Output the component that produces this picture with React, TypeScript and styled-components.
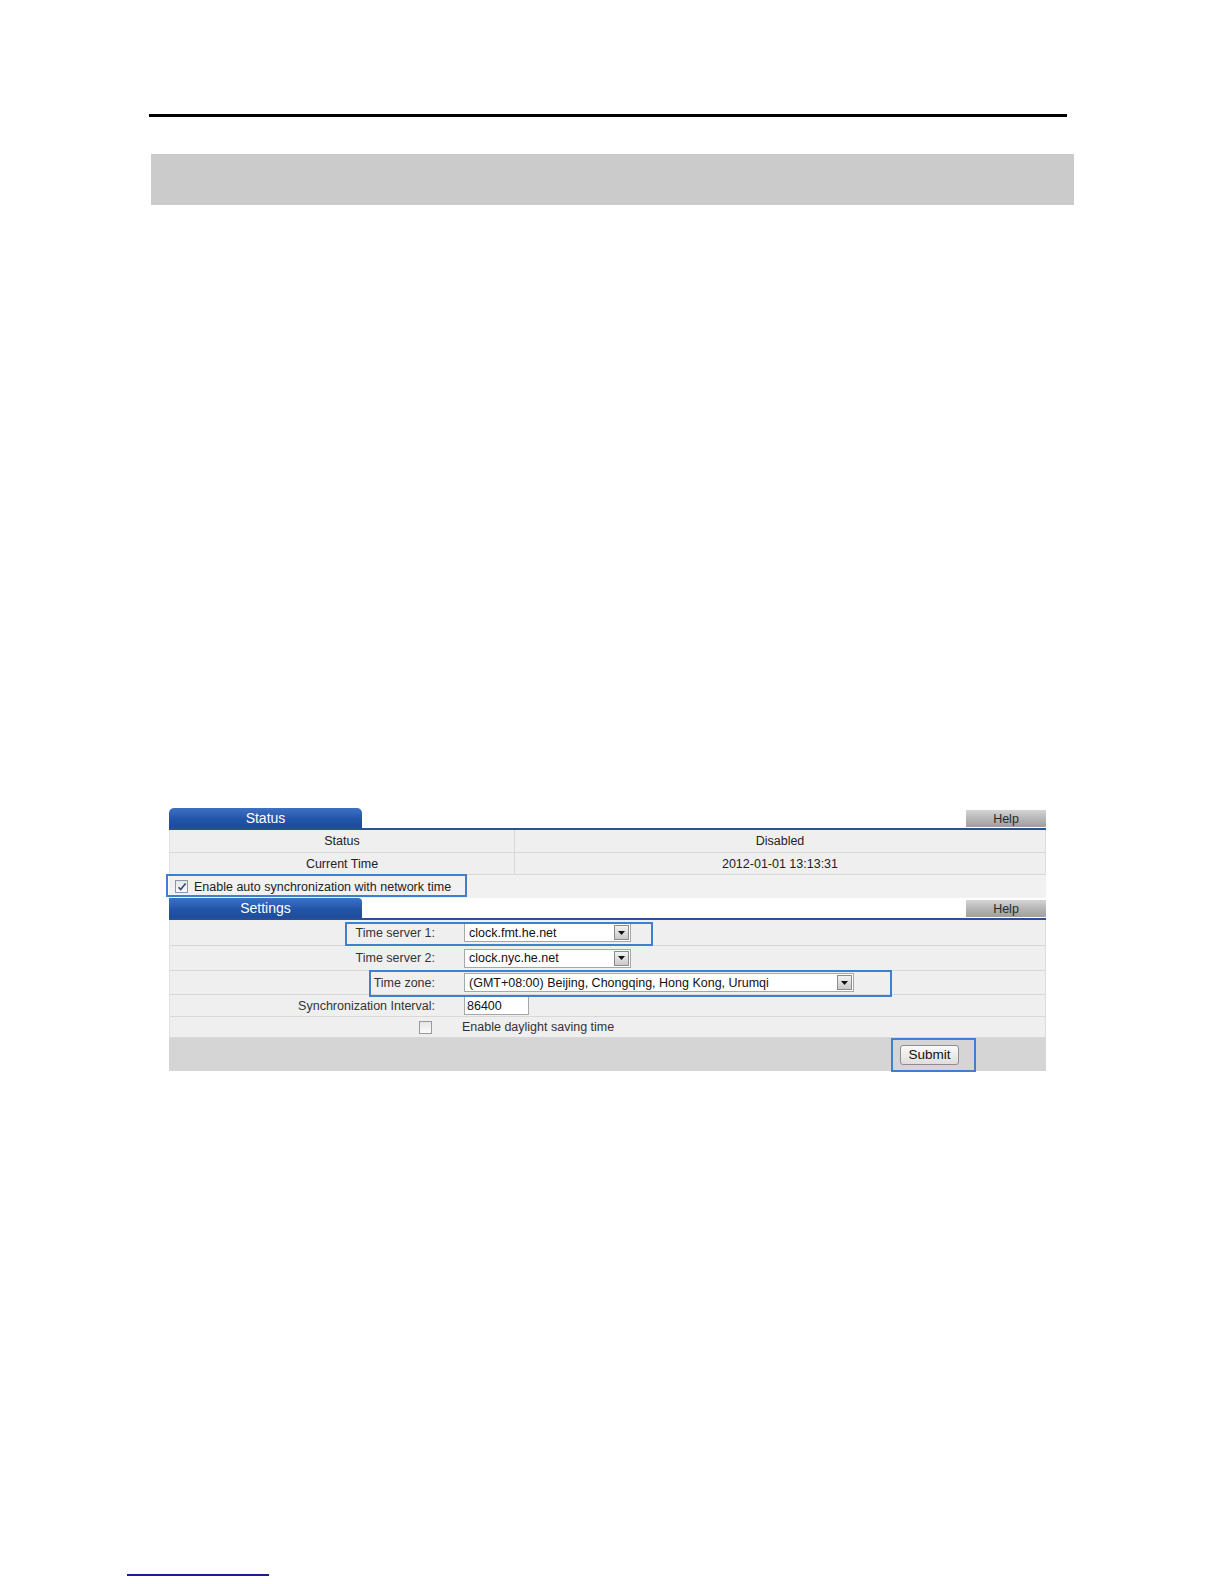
import React from 'react';
import styled, { createGlobalStyle } from 'styled-components';

const GlobalStyle = createGlobalStyle`
  html, body {
    margin: 0;
    padding: 0;
    background: #ffffff;
  }
  body {
    font-family: "Liberation Sans", Arial, sans-serif;
  }
`;

const Page = styled.div`
  width: 1224px;
  min-height: 1584px;
  display: flex;
  flex-direction: column;
  align-items: flex-start;
`;

const TopRule = styled.div`
  margin: 114px 0 0 149px;
  width: 918px;
  height: 3px;
  background: #000;
`;

const HeadingBand = styled.div`
  margin: 37px 0 0 151px;
  width: 923px;
  height: 51px;
  background: #cbcbcb;
`;

const FootRule = styled.div`
  margin: 503px 0 0 127px;
  width: 142px;
  height: 2px;
  background: #1c1c8c;
`;

const Panel = styled.div`
  position: relative;
  margin: 603px 0 0 169px;
  width: 877px;
  font-size: 12.5px;
  color: #222;
`;

const SectionHeader = styled.div`
  display: flex;
  justify-content: space-between;
  align-items: flex-end;
  height: 20px;
  border-bottom: 2px solid #2c5096;
`;

const Tab = styled.div<{ $square?: boolean }>`
  width: 193px;
  height: 20px;
  display: flex;
  align-items: center;
  justify-content: center;
  background: linear-gradient(#3e70c4, #2153a6 60%, #1f4c9a);
  border-radius: ${p => (p.$square ? '0 4px 0 0' : '5px 5px 0 0')};
  color: #fff;
  font-size: 14px;
`;

const HelpButton = styled.div`
  width: 80px;
  height: 17px;
  margin-bottom: 1px;
  display: flex;
  align-items: center;
  justify-content: center;
  background: linear-gradient(#d4d4d4, #b4b4b4 55%, #9f9f9f);
  color: #2a2a2a;
  font-size: 12.5px;
`;

const InfoRow = styled.div<{ $h: number }>`
  display: grid;
  grid-template-columns: 345px 1fr;
  height: ${p => p.$h}px;
  background: #efefef;
  border-bottom: 1px solid #d8d8d8;
  border-left: 1px solid #e2e2e2;
  border-right: 1px solid #dcdcdc;
  box-sizing: border-box;
`;

const InfoCell = styled.div<{ $divider?: boolean }>`
  display: flex;
  align-items: center;
  justify-content: center;
  border-right: ${p => (p.$divider ? '1px solid #d8d8d8' : 'none')};
`;

const CheckRow = styled.div`
  height: 23px;
  display: flex;
  align-items: center;
  gap: 6px;
  padding-left: 6px;
  background: #f1f1f1;
`;

const Box = styled.span<{ $checked?: boolean }>`
  width: 11px;
  height: 11px;
  display: inline-flex;
  align-items: center;
  justify-content: center;
  border: 1px solid ${p => (p.$checked ? '#8597b4' : '#9a9a9a')};
  background: linear-gradient(#e6e6e6, #fbfbfb);
  flex-shrink: 0;
`;

const SettingRow = styled.div<{ $h: number }>`
  display: grid;
  grid-template-columns: 265px 1fr;
  column-gap: 29px;
  align-items: center;
  height: ${p => p.$h}px;
  background: #efefef;
  border-bottom: 1px solid #d8d8d8;
  border-left: 1px solid #e2e2e2;
  border-right: 1px solid #dcdcdc;
  box-sizing: border-box;
`;

const Label = styled.div<{ $left?: boolean }>`
  text-align: ${p => (p.$left ? 'left' : 'right')};
  margin-left: ${p => (p.$left ? '-2px' : '0')};
  color: #333;
`;

const Field = styled.div`
  display: flex;
  align-items: center;
`;

const Select = styled.div<{ $w: number }>`
  width: ${p => p.$w}px;
  height: 19px;
  box-sizing: border-box;
  display: flex;
  align-items: center;
  justify-content: space-between;
  padding: 0 1px 0 4px;
  background: #fff;
  border: 1px solid #a7a7a7;
  color: #111;
`;

const Arrow = styled.span`
  width: 15px;
  height: 15px;
  box-sizing: border-box;
  display: inline-flex;
  align-items: center;
  justify-content: center;
  border: 1px solid #8c8c8c;
  background: linear-gradient(#f2f2f2, #c9c9c9);
`;

const TextInput = styled.div`
  width: 65px;
  height: 19px;
  box-sizing: border-box;
  display: flex;
  align-items: center;
  padding-left: 2px;
  background: #fff;
  border: 1px solid #a7a7a7;
  color: #111;
`;

const CheckCell = styled.div`
  display: flex;
  justify-content: flex-end;
  padding-right: 3px;
`;

const Footer = styled.div`
  height: 33px;
  display: flex;
  align-items: center;
  padding-left: 731px;
  background: #d5d5d5;
`;

const SubmitButton = styled.div`
  width: 59px;
  height: 20px;
  box-sizing: border-box;
  display: flex;
  align-items: center;
  justify-content: center;
  border: 1px solid #8e8e8e;
  border-radius: 3px;
  background: linear-gradient(#fafafa, #dedede);
  color: #111;
  font-size: 13.5px;
`;

const Highlight = styled.div<{ $x: number; $y: number; $w: number; $h: number }>`
  position: absolute;
  left: ${p => p.$x}px;
  top: ${p => p.$y}px;
  width: ${p => p.$w}px;
  height: ${p => p.$h}px;
  box-sizing: border-box;
  border: 2px solid #3f80cc;
  pointer-events: none;
`;

const DownArrow = () => (
  <svg width="7" height="4" viewBox="0 0 7 4">
    <path d="M0 0h7L3.5 4z" fill="#111" />
  </svg>
);

const Tick = () => (
  <svg width="10" height="10" viewBox="0 0 10 10">
    <path d="M1.5 5.2l2.2 2.4L8.6 1.6" fill="none" stroke="#2b4a86" strokeWidth="1.6" />
  </svg>
);

export default function App() {
  return (
    <Page>
      <GlobalStyle />
      <TopRule />
      <HeadingBand />

      <Panel>
        <SectionHeader>
          <Tab>Status</Tab>
          <HelpButton>Help</HelpButton>
        </SectionHeader>
        <InfoRow $h={23}>
          <InfoCell $divider>Status</InfoCell>
          <InfoCell>Disabled</InfoCell>
        </InfoRow>
        <InfoRow $h={22}>
          <InfoCell $divider>Current Time</InfoCell>
          <InfoCell>2012-01-01 13:13:31</InfoCell>
        </InfoRow>
        <CheckRow>
          <Box $checked><Tick /></Box>
          <span>Enable auto synchronization with network time</span>
        </CheckRow>

        <SectionHeader>
          <Tab $square>Settings</Tab>
          <HelpButton>Help</HelpButton>
        </SectionHeader>
        <SettingRow $h={26}>
          <Label>Time server 1:</Label>
          <Field>
            <Select $w={167}>
              <span>clock.fmt.he.net</span>
              <Arrow><DownArrow /></Arrow>
            </Select>
          </Field>
        </SettingRow>
        <SettingRow $h={25}>
          <Label>Time server 2:</Label>
          <Field>
            <Select $w={167}>
              <span>clock.nyc.he.net</span>
              <Arrow><DownArrow /></Arrow>
            </Select>
          </Field>
        </SettingRow>
        <SettingRow $h={24}>
          <Label>Time zone:</Label>
          <Field>
            <Select $w={390}>
              <span>(GMT+08:00) Beijing, Chongqing, Hong Kong, Urumqi</span>
              <Arrow><DownArrow /></Arrow>
            </Select>
          </Field>
        </SettingRow>
        <SettingRow $h={22}>
          <Label>Synchronization Interval:</Label>
          <Field>
            <TextInput>86400</TextInput>
          </Field>
        </SettingRow>
        <SettingRow $h={21}>
          <CheckCell><Box /></CheckCell>
          <Label $left>Enable daylight saving time</Label>
        </SettingRow>
        <Footer>
          <SubmitButton>Submit</SubmitButton>
        </Footer>

        <Highlight $x={-3} $y={66} $w={301} $h={23} />
        <Highlight $x={176} $y={114} $w={308} $h={24} />
        <Highlight $x={200} $y={162} $w={523} $h={27} />
        <Highlight $x={722} $y={230} $w={85} $h={34} />
      </Panel>

      <FootRule />
    </Page>
  );
}
